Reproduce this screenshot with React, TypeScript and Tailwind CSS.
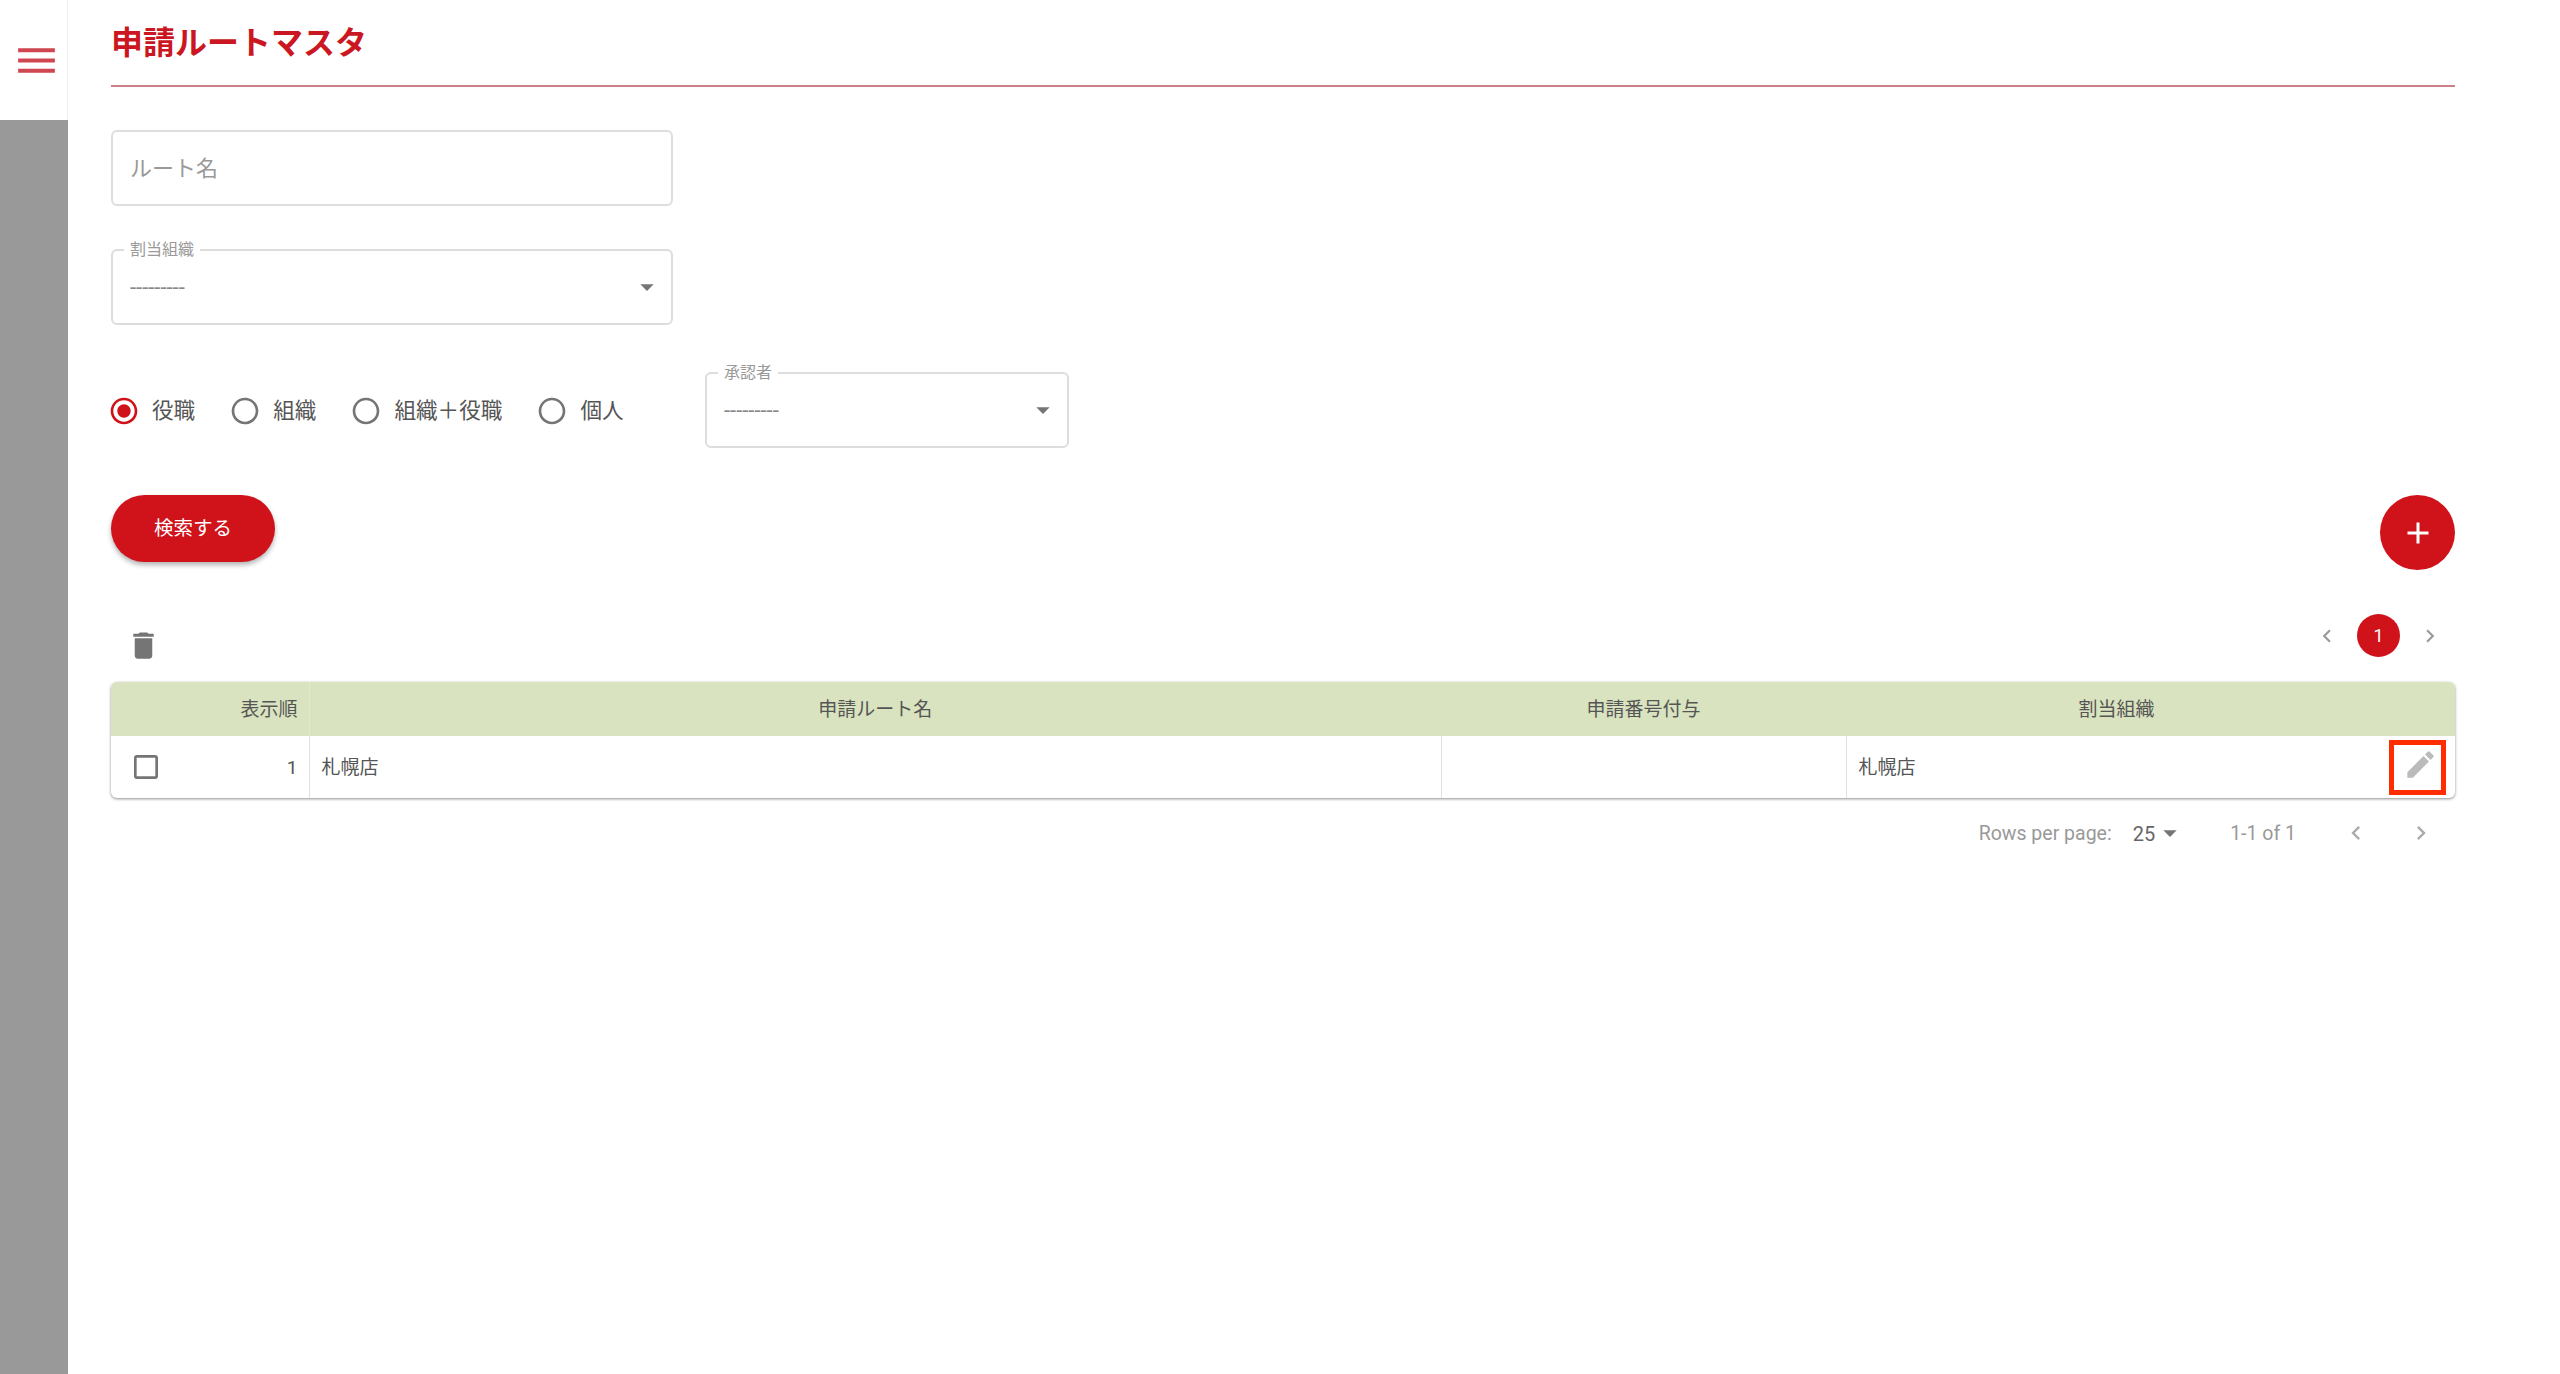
import {
  MdAdd,
  MdArrowDropDown,
  MdCheckBoxOutlineBlank,
  MdChevronLeft,
  MdChevronRight,
  MdDelete,
  MdEdit,
  MdMenu,
  MdRadioButtonChecked,
  MdRadioButtonUnchecked,
} from 'react-icons/md';

const RADIOS = [
  { label: '役職', checked: true },
  { label: '組織', checked: false },
  { label: '組織＋役職', checked: false },
  { label: '個人', checked: false },
];

export default function App() {
  return (
    <div className="flex min-h-screen bg-white font-[Roboto,'Noto_Sans_CJK_JP',sans-serif]">
      {/* Side rail */}
      <aside className="flex w-[68px] shrink-0 flex-col">
        <div className="flex h-[120px] items-center justify-center border-r border-[#f0f0f0] bg-white pl-[5px]">
          <MdMenu size={49} className="text-[#cf4650]" />
        </div>
        <div className="flex-1 bg-[#999999]" />
      </aside>

      <main className="min-w-0 flex-1 pl-[43px] pr-[105px]">
        {/* Header */}
        <div className="h-[87px] border-b-2 border-[#cc8189] pt-[21px]">
          <h1 className="text-[32px] leading-[44px] font-bold text-[#cb1722]">申請ルートマスタ</h1>
        </div>

        {/* Filters */}
        <input
          type="text"
          placeholder="ルート名"
          className="mt-[43px] block h-[76px] w-[562px] rounded-md border-2 border-[#dddddd] px-[17px] text-[22px] outline-none placeholder:text-[#999999]"
        />
        <div className="mt-[43px]">
          <SelectBox label="割当組織" width="w-[562px]" />
        </div>

        <div className="mt-[47px] flex items-start">
          <div className="flex h-[76px] w-[594px] items-center pt-[3px]">
            {RADIOS.map((radio) => (
              <label key={radio.label} className="mr-[37px] flex items-center gap-[15px] text-[21.6px] text-[#555555]">
                {radio.checked ? (
                  <MdRadioButtonChecked size={32} className="-mx-[3px] text-[#d0121b]" />
                ) : (
                  <MdRadioButtonUnchecked size={32} className="-mx-[3px] text-[#757575]" />
                )}
                {radio.label}
              </label>
            ))}
          </div>
          <SelectBox label="承認者" width="w-[364px]" />
        </div>

        {/* Actions */}
        <div className="mt-[47px] flex items-start justify-between">
          <button className="h-[67px] w-[164px] rounded-full bg-[#d0121b] text-[19.5px] text-white shadow-[0_3px_5px_rgba(0,0,0,0.3)]">
            検索する
          </button>
          <button className="flex h-[75px] w-[75px] items-center justify-center rounded-full bg-[#d0121b] text-white">
            <MdAdd size={36} />
          </button>
        </div>

        {/* Toolbar */}
        <div className="flex h-[112px] items-start justify-between">
          <MdDelete size={35} className="ml-[15px] mt-[58px] text-[#757575]" />
          <div className="mr-[12px] mt-[44px] flex items-center">
            <MdChevronLeft size={26} className="text-[#999999]" />
            <span className="mx-[17px] flex h-[43px] w-[43px] items-center justify-center rounded-full bg-[#d0121b] text-[18px] text-white">
              1
            </span>
            <MdChevronRight size={26} className="text-[#999999]" />
          </div>
        </div>

        {/* Table */}
        <div className="rounded-md bg-white shadow-[0_1px_3px_rgba(0,0,0,0.45)]">
          <table className="w-full table-fixed border-collapse text-[19px]">
            <thead>
              <tr className="h-[54px] bg-[#d9e3bf] text-[#555555]">
                <th className="w-[198px] rounded-tl-md border-r border-[#e3e9d0] pr-[11px] pt-[2px] text-right font-normal">表示順</th>
                <th className="w-[1132px] pt-[2px] font-normal">申請ルート名</th>
                <th className="w-[405px] pt-[2px] font-normal">申請番号付与</th>
                <th className="rounded-tr-md pr-[68px] pt-[2px] font-normal">割当組織</th>
              </tr>
            </thead>
            <tbody>
              <tr className="h-[62px] text-[#555555]">
                <td className="border-r border-[#e0e0e0] pr-[11px]">
                  <div className="flex items-center justify-between pl-[19px]">
                    <MdCheckBoxOutlineBlank size={32} className="text-[#757575]" />
                    <span className="pt-[2px]">1</span>
                  </div>
                </td>
                <td className="border-r border-[#e0e0e0] pl-[12px] pt-[2px]">札幌店</td>
                <td className="border-r border-[#e0e0e0]" />
                <td className="pl-[12px]">
                  <div className="flex items-center justify-between pr-[9px]">
                    <span className="pt-[2px]">札幌店</span>
                    <span className="flex h-[55px] w-[57px] items-center justify-center border-[5px] border-[#ff2d00] pb-[5px] pl-[5px]">
                      <MdEdit size={35} className="text-[#bbbbbb]" />
                    </span>
                  </div>
                </td>
              </tr>
            </tbody>
          </table>
        </div>

        {/* Table footer */}
        <div className="flex h-[70px] items-center justify-end text-[19.5px] text-[#999999]">
          <span className="pt-[1px]">Rows per page:</span>
          <span className="ml-[21px] pt-[1px] text-[20px] text-[#666666]">25</span>
          <MdArrowDropDown size={32} className="-ml-[1px] text-[#757575]" />
          <span className="ml-[44px] pt-[1px]">1-1 of 1</span>
          <MdChevronLeft size={28} className="ml-[46px] text-[#aaaaaa]" />
          <MdChevronRight size={28} className="ml-[37px] mr-[20px] text-[#aaaaaa]" />
        </div>
      </main>
    </div>
  );
}

function SelectBox({ label, width }: { label: string; width: string }) {
  return (
    <div className={`relative flex h-[76px] items-center justify-between rounded-md border-2 border-[#dddddd] pl-[17px] pr-[8px] ${width}`}>
      <span className="absolute -top-[11px] left-[11px] bg-white px-[6px] text-[16px] leading-[20px] text-[#999999]">{label}</span>
      <span className="pt-[1px] text-[22px] text-[#888888]">---------</span>
      <MdArrowDropDown size={32} className="text-[#757575]" />
    </div>
  );
}
